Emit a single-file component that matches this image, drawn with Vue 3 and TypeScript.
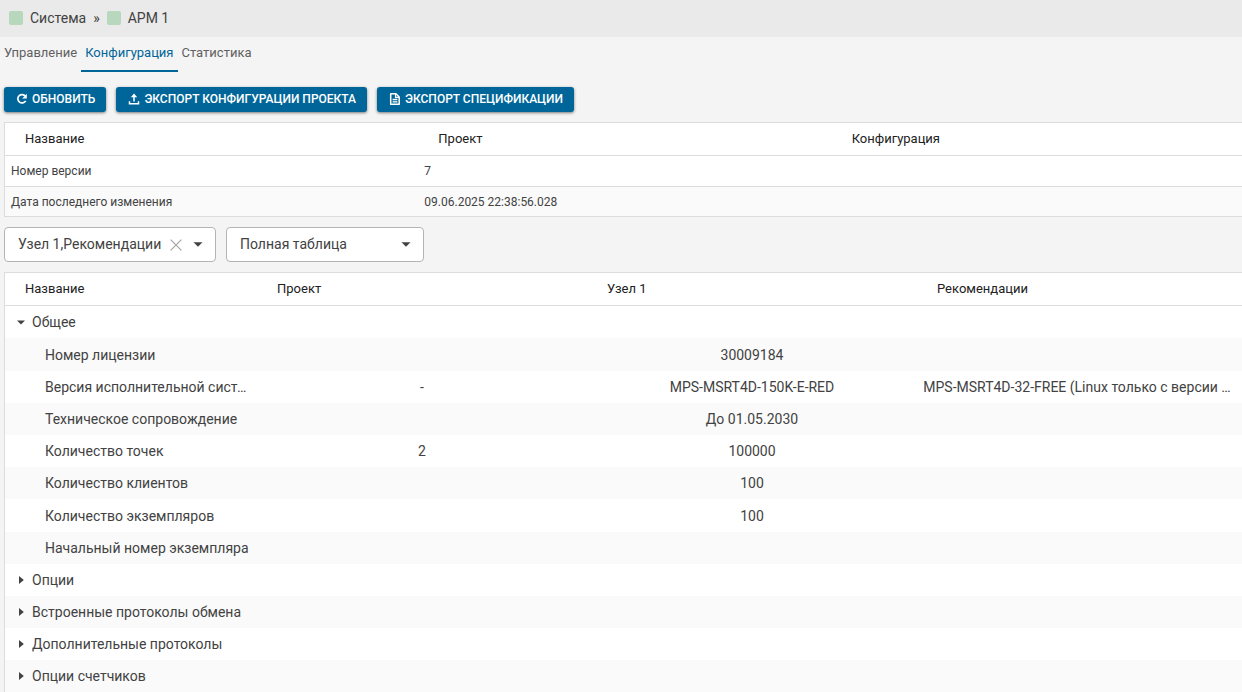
<script setup lang="ts">
import { ref } from 'vue'

interface VersionRow {
  name: string
  project: string
  config: string
}

interface ParamRow {
  name: string
  kind: 'open' | 'closed' | 'leaf'
  values: [string, string, string]
}

const tabs = ['Управление', 'Конфигурация', 'Статистика']
const activeTab = ref('Конфигурация')
const nodes = ref('Узел 1,Рекомендации')
const view = ref('Полная таблица')

const versions: VersionRow[] = [
  { name: 'Номер версии', project: '7', config: '' },
  { name: 'Дата последнего изменения', project: '09.06.2025 22:38:56.028', config: '' },
]

const params: ParamRow[] = [
  { name: 'Общее', kind: 'open', values: ['', '', ''] },
  { name: 'Номер лицензии', kind: 'leaf', values: ['', '30009184', ''] },
  {
    name: 'Версия исполнительной системы',
    kind: 'leaf',
    values: ['-', 'MPS-MSRT4D-150K-E-RED', 'MPS-MSRT4D-32-FREE (Linux только с версии …'],
  },
  { name: 'Техническое сопровождение', kind: 'leaf', values: ['', 'До 01.05.2030', ''] },
  { name: 'Количество точек', kind: 'leaf', values: ['2', '100000', ''] },
  { name: 'Количество клиентов', kind: 'leaf', values: ['', '100', ''] },
  { name: 'Количество экземпляров', kind: 'leaf', values: ['', '100', ''] },
  { name: 'Начальный номер экземпляра', kind: 'leaf', values: ['', '', ''] },
  { name: 'Опции', kind: 'closed', values: ['', '', ''] },
  { name: 'Встроенные протоколы обмена', kind: 'closed', values: ['', '', ''] },
  { name: 'Дополнительные протоколы', kind: 'closed', values: ['', '', ''] },
  { name: 'Опции счетчиков', kind: 'closed', values: ['', '', ''] },
]
</script>

<template>
  <div class="page">
    <nav class="crumbs">
      <span class="status"></span>
      <a href="#" class="crumb">Система</a>
      <span class="sep">»</span>
      <span class="status"></span>
      <a href="#" class="crumb">АРМ 1</a>
    </nav>

    <div class="tabs" role="tablist">
      <button
        v-for="tab in tabs"
        :key="tab"
        type="button"
        role="tab"
        class="tab"
        :class="{ active: tab === activeTab }"
        :aria-selected="tab === activeTab"
        @click="activeTab = tab"
      >
        {{ tab }}
      </button>
    </div>

    <main class="content">
      <div class="toolbar">
        <button type="button" class="action">
          <svg class="icon" viewBox="0 0 12 12" aria-hidden="true">
            <path d="M9.400 3.200A4.200 4.200 0 1 0 9.700 7.800" fill="none" stroke="currentColor" stroke-width="1.700" />
            <path d="M10.800 .8V5.400H6.200z" fill="currentColor" />
          </svg>
          Обновить
        </button>
        <button type="button" class="action">
          <svg class="icon" viewBox="0 0 12 12" aria-hidden="true">
            <path d="M6 8.500V3M1.500 8.300V10.800H10.500V8.300" fill="none" stroke="currentColor" stroke-width="1.500" />
            <path d="M6 .6L9.200 4.300H2.800z" fill="currentColor" />
          </svg>
          Экспорт конфигурации проекта
        </button>
        <button type="button" class="action">
          <svg class="icon" viewBox="0 0 12 12" aria-hidden="true">
            <path d="M1.700 .8H7L10.200 4V11.200H1.700z" fill="none" stroke="currentColor" stroke-width="1.500" stroke-linejoin="round" />
            <path d="M6.600 1V4.400H10M3.600 6.500H8.400M3.600 8.800H8.400" fill="none" stroke="currentColor" stroke-width="1.300" />
          </svg>
          Экспорт спецификации
        </button>
      </div>

      <div class="panel">
        <table class="grid versions">
          <thead>
            <tr>
              <th scope="col">Название</th>
              <th scope="col">Проект</th>
              <th scope="col">Конфигурация</th>
            </tr>
          </thead>
          <tbody>
            <tr v-for="row in versions" :key="row.name">
              <td>{{ row.name }}</td>
              <td>{{ row.project }}</td>
              <td>{{ row.config }}</td>
            </tr>
          </tbody>
        </table>
      </div>

      <div class="filters">
        <div class="field nodes">
          <select v-model="nodes" aria-label="Узлы">
            <option>Узел 1,Рекомендации</option>
          </select>
          <button type="button" class="clear" aria-label="Очистить">
            <svg viewBox="0 0 12 12" aria-hidden="true">
              <path d="M.6 .6L11.400 11.400M11.400 .6L.6 11.400" fill="none" stroke="currentColor" stroke-width="1.300" />
            </svg>
          </button>
          <svg class="caret" viewBox="0 0 10 5" aria-hidden="true"><path d="M.5 .2H9.500L5 4.800z" fill="currentColor" /></svg>
        </div>
        <div class="field view">
          <select v-model="view" aria-label="Вид таблицы">
            <option>Полная таблица</option>
          </select>
          <svg class="caret" viewBox="0 0 10 5" aria-hidden="true"><path d="M.5 .2H9.500L5 4.800z" fill="currentColor" /></svg>
        </div>
      </div>

      <div class="panel">
        <table class="grid params">
          <colgroup>
            <col class="name-col" />
            <col />
            <col />
            <col />
          </colgroup>
          <thead>
            <tr>
              <th scope="col">Название</th>
              <th scope="col">Проект</th>
              <th scope="col">Узел 1</th>
              <th scope="col">Рекомендации</th>
            </tr>
          </thead>
          <tbody>
            <tr v-for="row in params" :key="row.name" :class="row.kind">
              <th scope="row">
                <button v-if="row.kind !== 'leaf'" type="button" class="toggle" :aria-expanded="row.kind === 'open'">
                  <svg class="arrow" viewBox="0 0 8 8" aria-hidden="true">
                    <path :d="row.kind === 'open' ? 'M0 2.500H8L4 6.500z' : 'M2 0V8L6.800 4z'" fill="currentColor" />
                  </svg>
                  {{ row.name }}
                </button>
                <template v-else>{{ row.name }}</template>
              </th>
              <td v-for="(value, index) in row.values" :key="index">{{ value }}</td>
            </tr>
          </tbody>
        </table>
      </div>
    </main>
  </div>
</template>

<style>
body {
  background: #f4f4f4;
  overflow: hidden;
}
</style>

<style scoped>
.page {
  min-height: 100vh;
  background: #f4f4f4;
  color: #424242;
  font-family: Roboto, "Liberation Sans", sans-serif;
  font-size: 14px;
}

button,
select {
  font: inherit;
  color: inherit;
}

.crumbs {
  display: flex;
  align-items: center;
  box-sizing: border-box;
  height: 37px;
  padding: 0 0 2px 9px;
  background: #eaeaea;
}

.status {
  width: 14px;
  height: 14px;
  margin-right: 7px;
  border-radius: 2px;
  background: #b8d8be;
}

.crumb {
  color: inherit;
  text-decoration: none;
}

.sep {
  margin: 0 7px;
}

.tabs {
  display: flex;
  height: 35px;
}

.tab {
  padding: 0 4px 3px;
  border: 0;
  border-bottom: 2px solid transparent;
  background: none;
  color: #616161;
  font-size: 13px;
}

.tab.active {
  border-bottom-color: #006699;
  color: #006699;
}

.content {
  padding: 15px 0 0 4px;
}

.toolbar {
  display: flex;
  gap: 10px;
}

.action {
  display: flex;
  align-items: center;
  gap: 4px;
  height: 25px;
  padding: 0 11px 1px 12px;
  border: 0;
  border-radius: 3px;
  background: #006699;
  box-shadow: 0 1px 3px rgba(0, 0, 0, 0.5);
  color: #fff;
  font-size: 12px;
  font-weight: 500;
  text-transform: uppercase;
  white-space: nowrap;
}

.icon {
  width: 12px;
  height: 12px;
}

.panel {
  overflow: hidden;
  border: 1px solid #dcdcdc;
  border-right: 0;
  background: #fff;
}

.toolbar + .panel {
  margin-top: 10px;
}

.grid {
  table-layout: fixed;
  width: calc(100% + 5px);
  border-collapse: collapse;
  text-align: left;
}

.versions {
  width: calc(100% + 3px);
}

.grid th,
.grid td {
  overflow: hidden;
  white-space: nowrap;
  text-overflow: ellipsis;
}

.grid thead th {
  height: 30px;
  padding: 0 0 2px 20px;
  border-bottom: 1px solid #dcdcdc;
  color: #212121;
  font-size: 13px;
  font-weight: 400;
}

.versions td {
  height: 30px;
  padding: 0 6px;
  font-size: 12px;
}

.versions tbody tr + tr td {
  height: 29px;
  border-top: 1px solid #dcdcdc;
}

.grid tbody tr:nth-child(even) {
  background: #fafafa;
}

.name-col {
  width: 252px;
}

.params tbody th {
  padding: 0 5px 0 40px;
  font-weight: 400;
}

.params tbody th,
.params tbody td {
  height: 32px;
}

.params .leaf:nth-child(5n + 2) th {
  height: 33px;
}

.params .open th,
.params .closed th {
  padding-left: 12px;
}

.params td {
  padding: 0;
  text-align: center;
}

.params td:last-child {
  padding-right: 10px;
}

.toggle {
  display: flex;
  align-items: center;
  gap: 7px;
  padding: 0;
  border: 0;
  background: none;
}

.arrow {
  width: 8px;
  height: 8px;
}

.filters {
  display: flex;
  gap: 10px;
  margin: 10px 0;
}

.field {
  display: grid;
  grid-template-columns: 1fr auto auto;
  align-items: center;
  box-sizing: border-box;
  height: 35px;
  padding-right: 12px;
  border: 1px solid #b4b4b4;
  border-radius: 4px;
  background: #fff;
}

.nodes {
  width: 212px;
}

.view {
  width: 198px;
}

.field select {
  grid-area: 1 / 1 / 2 / 4;
  width: 100%;
  height: 33px;
  padding: 0 0 1px 13px;
  border: 0;
  background: none;
  appearance: none;
}

.clear {
  grid-area: 1 / 2;
  display: flex;
  margin-right: 11px;
  padding: 0;
  border: 0;
  background: none;
  color: #a8a8a8;
}

.clear svg {
  width: 12px;
  height: 12px;
}

.caret {
  grid-area: 1 / 3;
  width: 10px;
  height: 5px;
  pointer-events: none;
}
</style>
